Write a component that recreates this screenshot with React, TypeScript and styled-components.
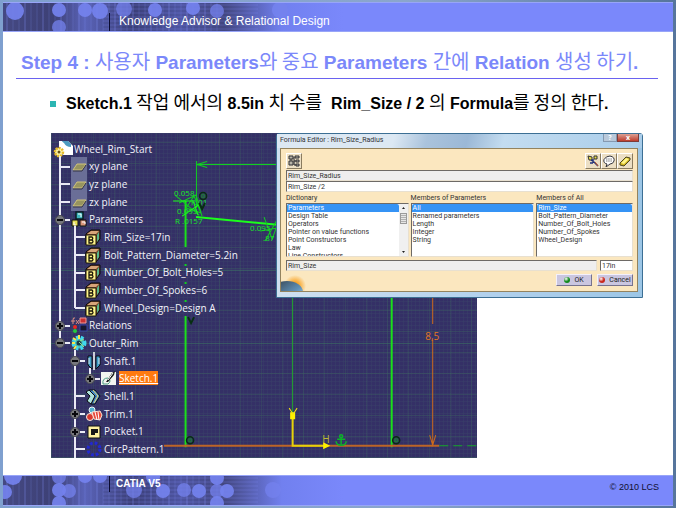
import React from 'react';
import styled, { createGlobalStyle } from 'styled-components';

const GlobalStyle = createGlobalStyle`
  *, *::before, *::after { box-sizing: border-box; }
  body { margin: 0; background: #5f84bd; }
  h1, h2, p, ul { margin: 0; padding: 0; }
`;

const sans = `"Liberation Sans", "Noto Sans CJK KR", sans-serif`;
const ui = `"Open Sans", "Noto Sans", sans-serif`;
const compact = `Roboto, "Open Sans", sans-serif`;

/* ---------- slide frame ---------- */

const Slide = styled.div`
  min-height: 100vh;
  display: flex;
  flex-direction: column;
  padding: 2px 3px;
  background: linear-gradient(90deg, #7fa0cf, #8ba6cc 60%, #56759c);
  font-family: ${sans};
`;

const Band = styled.header<{ $foot?: boolean }>`
  position: relative;
  display: flex;
  align-items: flex-start;
  height: ${p => (p.$foot ? 31 : 30)}px;
  background: #7a88fb;
  border: solid #98a5f8;
  border-width: 1px 0;
  overflow: hidden;
`;

const BandArt = styled.svg`
  position: absolute;
  inset: 0 auto 0 0;
`;

const BandTick = styled.span<{ $foot?: boolean }>`
  position: relative;
  width: 1px;
  height: ${p => (p.$foot ? 16 : 20)}px;
  margin: ${p => (p.$foot ? 0 : 10)}px 0 0 106px;
  background: #0a0a30;
`;

const BandTitle = styled.p`
  position: relative;
  margin: 10px 0 0 9px;
  font-size: 12px;
  line-height: 16px;
  color: #fff;
`;

const Product = styled.p`
  position: relative;
  margin: 2px 0 0 6px;
  font-size: 10px;
  line-height: 12px;
  font-weight: 700;
  color: #fff;
`;

const Copyright = styled.p`
  position: relative;
  margin: 4px 14px 0 auto;
  font-size: 9px;
  line-height: 14px;
  color: #101030;
`;

const Body = styled.main`
  flex: 1;
  background: #fff;
  padding: 17px 15px 16px 13px;
`;

const Title = styled.h1`
  padding: 0 5px 1px;
  border-bottom: 1px solid #6a62f0;
  font-size: 19px;
  line-height: 28px;
  color: #7b88fa;
  white-space: nowrap;
`;

const Ko = styled.span<{ $small?: boolean }>`
  font-family: "Noto Sans CJK KR", sans-serif;
  font-size: ${p => (p.$small ? 18 : 20)}px;
  font-weight: 400;
  line-height: 1;
`;

const Bullet = styled.h2`
  display: flex;
  align-items: center;
  gap: 10px;
  margin: 13px 0 18px 34px;
  font-size: 16px;
  line-height: 22px;
  color: #000;
  white-space: pre;

  &::before {
    content: '';
    width: 6px;
    height: 6px;
    background: #2cb5b2;
  }
`;

/* ---------- figure ---------- */

const Figure = styled.section`
  position: relative;
  margin: 0 15px 0 35px;
`;

const Stage = styled.div`
  position: relative;
  width: 72%;
  height: 325px;
  overflow: hidden;
  background-color: #343066;
  background-image:
    repeating-linear-gradient(0deg, rgba(62, 120, 92, 0.28) 0 1px, transparent 1px 21px),
    repeating-linear-gradient(90deg, rgba(62, 120, 92, 0.22) 0 1px, transparent 1px 21px),
    repeating-linear-gradient(0deg, rgba(70, 100, 110, 0.14) 0 1px, transparent 1px 4px),
    repeating-linear-gradient(90deg, rgba(70, 100, 110, 0.14) 0 1px, transparent 1px 4px);
`;

const Drawing = styled.svg`
  position: absolute;
  inset: 0;
  width: 100%;
  height: 100%;
`;

const Tree = styled.ul`
  position: relative;
  display: grid;
  grid-template-rows: repeat(18, 1fr);
  height: 100%;
  padding: 7px 0 0 2px;
  list-style: none;
  font-family: ${ui};
  font-size: 10px;
  line-height: 14px;
  color: #f2f2fa;
`;

const TreeRow = styled.li`
  display: flex;
  align-items: center;
  min-height: 0;
`;

const Cell = styled.svg`
  flex: none;
  width: 15px;
  height: 18px;
  overflow: visible;
`;

const NodeIcon = styled.svg<{ $root?: boolean }>`
  flex: none;
  width: 16px;
  height: 16px;
  margin: ${p => (p.$root ? '0 3px 0 2px' : '0 2px 0 3px')};
  overflow: visible;
`;

const NodeName = styled.span<{ $active?: boolean }>`
  white-space: nowrap;
  ${p => p.$active && `
    background: #ff7a10;
    color: #fff;
    text-decoration: underline;
  `}
`;

/* ---------- formula editor ---------- */

const Dialog = styled.form`
  position: absolute;
  top: 0;
  right: 0;
  width: 62%;
  padding: 0 4px 5px 3px;
  border: 1px solid #3c6f94;
  border-radius: 3px 3px 0 0;
  background: linear-gradient(90deg, #cfe0f0, #b6d3ee 50%, #9cc6e6);
  font-family: ${compact};
  font-size: 7px;
  line-height: 9px;
  color: #333;
`;

const TitleBar = styled.div`
  display: flex;
  align-items: flex-start;
  justify-content: space-between;
  height: 14px;
  margin: 0 -4px 0 -3px;
  padding: 0 3px;
  background: linear-gradient(105deg, #dce8f3 0 32%, #aac3dc 41%, #9bb8d6 52%, #c3dcf0 62%, #a9cdea);
`;

const Caption = styled.span`
  padding-top: 2px;
`;

const WindowButtons = styled.div`
  display: flex;
`;

const WindowButton = styled.button<{ $close?: boolean }>`
  width: ${p => (p.$close ? 22 : 14)}px;
  height: 8px;
  padding: 0;
  border: 1px solid ${p => (p.$close ? '#7e3b38' : '#8599b0')};
  border-top: 0;
  background: ${p => (p.$close ? 'linear-gradient(#dda093, #bd3c2c)' : '#b9c9da')};
  color: #fff;
  font: 700 7px/7px ${ui};
`;

const Panel = styled.div`
  padding: 4px 4px 3px 5px;
  border: 1px solid #93835f;
  background: #fbe7bf;
`;

const Toolbar = styled.div`
  display: flex;
  margin-bottom: 1px;
`;

const ToolButton = styled.button<{ $push?: boolean }>`
  width: 16px;
  height: 16px;
  padding: 1px;
  margin-left: ${p => (p.$push ? 'auto' : 0)};
  border: 1px solid;
  border-color: #fff #8a7c60 #8a7c60 #fff;
  background: #ecdfc4;

  svg { display: block; width: 12px; height: 12px; }
`;

const Field = styled.input<{ $muted?: boolean }>`
  display: block;
  min-width: 0;
  width: 100%;
  height: 11px;
  padding: 0 1px;
  border: 1px solid;
  border-color: #6e6a66 #e8e0d0 #e8e0d0 #6e6a66;
  border-radius: 0;
  background: ${p => (p.$muted ? '#efeeee' : '#fff')};
  font: 7px/9px ${compact};
  color: #333;
`;

const Columns = styled.div`
  display: grid;
  grid-template-columns: 123fr 124fr 97fr;
  gap: 2px;
  padding-top: 2px;
`;

const Column = styled.div`
  display: flex;
  flex-direction: column;
  min-width: 0;
`;

const ListFrame = styled.div`
  display: flex;
  height: 54px;
  border: 1px solid;
  border-color: #6e6a66 #e8e0d0 #e8e0d0 #6e6a66;
  background: #fff;
  overflow: hidden;
`;

const List = styled.select`
  flex: 1;
  min-width: 0;
  height: 62px;
  padding: 0;
  border: 0;
  outline: 0;
  background: #fff;
  overflow: hidden;
  font: 7px/8px ${compact};
  color: #333;

  option {
    min-height: 0;
    height: 8px;
    padding: 0 1px;
    line-height: 8px;
    font-size: 7px;
  }
  option:checked {
    background: linear-gradient(#3593f5, #3593f5);
    color: #fff;
  }
`;

const ScrollRail = styled.div`
  display: flex;
  flex-direction: column;
  justify-content: space-between;
  width: 9px;
  background: #f0f0f0;
`;

const ScrollKey = styled.svg`
  width: 9px;
  height: 8px;
`;

const ScrollThumb = styled.span`
  height: 11px;
  margin: 0 1px 24px;
  border: 1px solid #9a9a9a;
  background: repeating-linear-gradient(#e6e6e6 0 1px, #b0b0b0 1px 2px);
`;

const ValueRow = styled.div`
  display: grid;
  grid-template-columns: 1fr 33px;
  gap: 3px;
  padding-top: 3px;
`;

const Actions = styled.div`
  display: flex;
  align-items: flex-end;
  gap: 5px;
  margin-top: 2px;
`;

const Emblem = styled.svg`
  width: 28px;
  height: 18px;
  margin: 0 auto -3px -5px;
`;

const ActionButton = styled.button`
  display: flex;
  align-items: center;
  justify-content: center;
  gap: 4px;
  width: 36px;
  height: 12px;
  padding: 0;
  margin-bottom: 2px;
  border: 1px solid;
  border-color: #f3f0fb #77738e #77738e #f3f0fb;
  background: #cac6e0;
  font: 7px/9px ${compact};
  color: #222;
`;

const Lamp = styled.span<{ $tone: string }>`
  width: 6px;
  height: 6px;
  border-radius: 50%;
  background: radial-gradient(circle at 35% 30%, #fff, ${p => p.$tone} 50%);
`;

/* ---------- drawings ---------- */

function BandPattern({ id, foot }: { id: string; foot?: boolean }) {
  const top = [[12, 8, 9], [56, 7, 7], [56, 24, 7], [82, 7, 7], [97, 8, 8], [121, 6, 8], [152, 7, 7], [190, 5, 7], [214, 8, 7], [277, 7, 8]];
  const low = [[10, 0, 9], [2, 16, 7], [56, 1, 7], [56, 14, 7], [56, 27, 7], [66, 15, 7], [82, 0, 7], [97, 0, 7], [131, 14, 8], [150, 1, 7], [160, 15, 7], [181, 14, 7], [196, 15, 7], [214, 2, 7], [214, 15, 7], [214, 27, 7], [224, 15, 7], [270, 14, 8]];
  return (
    <BandArt width="340" height="31" viewBox="0 0 340 31" aria-hidden="true">
      <defs>
        <linearGradient id={id}>
          <stop offset="0" stopColor="#454983" />
          <stop offset=".15" stopColor="#3d4075" />
          <stop offset=".24" stopColor="#5a63b8" />
          <stop offset=".38" stopColor="#3b3f78" />
          <stop offset=".52" stopColor="#4d54a0" />
          <stop offset=".65" stopColor="#42467f" />
          <stop offset=".82" stopColor="#7180ef" />
          <stop offset="1" stopColor="#7a88fb" />
        </linearGradient>
      </defs>
      <rect width="340" height="31" fill={`url(#${id})`} />
      {Array.from({ length: 36 }, (_, i) => (
        <path key={i} d={`M${i * 6 + 4} 0v31`} stroke="#8795ff" strokeOpacity={i % 3 ? 0.2 : 0.4} />
      ))}
      {Array.from({ length: 8 }, (_, i) => (
        <path key={i} d={`M100 ${i * 4 + 2}H255`} stroke="#8795ff" strokeOpacity=".25" />
      ))}
      {(foot ? low : top).map(([x, y, r], i) => (
        <circle key={i} cx={x} cy={y} r={r} fill="#7482ee" fillOpacity={i % 3 === 2 ? 0.75 : 0.92} />
      ))}
    </BandArt>
  );
}

function Sketch() {
  return (
    <Drawing viewBox="0 0 426 325" preserveAspectRatio="xMinYMin slice" aria-hidden="true">
      <path d="M0 210.500H426M0 137.500H226" stroke="#3c7a62" strokeOpacity=".5" />
      <g stroke="#10d020" fill="none">
        <path d="M145.500 28V75M146 31.500H240M146 31.500l10-3M146 31.500l10 3" />
        <path d="M134.500 68V114M134.500 183V314M340.500 160V314" stroke="#1be01b" strokeWidth="2" />
        <path d="M134.500 131v50" strokeWidth="2" strokeDasharray="2 16" />
        <path d="M241.500 160V280" stroke="#22a82c" />
        <path d="M145 84l84 8" stroke="#1bff1b" strokeWidth="2" />
        <path d="M124 62l24 20M128 70l17-8 5 18-15-5 8-12 8 20M213 84l8 22 8-22M214 108l14-25M209 98l17-3" />
        <path d="M122 68h20l5 14M131 83l18-12" stroke="#1bff1b" />
      </g>
      <g fontFamily="Open Sans, sans-serif" fontSize="8" fill="#18e828">
        <text x="123" y="63">0.058</text>
        <text x="140" y="72">R.01</text>
        <text x="126" y="81">0.095</text>
        <text x="124" y="91">R .0157</text>
        <text x="199" y="98">0.095</text>
        <text x="212" y="108">.87</text>
      </g>
      <path d="M113 312.500H388" stroke="#bd6527" strokeWidth="2" />
      <path d="M388 312.500H426" stroke="#16a52a" strokeDasharray="9 5" />
      <path d="M381.500 160V191M381.500 207V312M378.500 302l3 10 3-10" stroke="#ce6a1c" fill="none" />
      <text x="374" y="207" fontFamily="Open Sans, sans-serif" fontSize="10" fill="#e57622">8,5</text>
      <path d="M241.500 280V312.500H276" stroke="#e6d20a" strokeWidth="2" fill="none" />
      <path d="M239 279h5v7h-5zM272 309l7 3.500-7 3.500z" fill="#fff000" />
      <path d="M238 275l4 6 4-6" stroke="#f2e311" fill="none" />
      <text x="271" y="310" fontFamily="Open Sans, sans-serif" fontSize="10" fill="#bdb832">H</text>
      <g stroke="#072f12" fill="none">
        {[[139, 307], [345, 307], [152, 63]].map(([x, y]) => (
          <g key={`${x}-${y}`}>
            <circle cx={x} cy={y} r="3.500" strokeWidth="1.500" />
            <circle cx={x} cy={y} r="1.500" stroke="#18892a" />
          </g>
        ))}
        <path d="M137 184l3 6 3-6M148 70l3 6 3-6" strokeWidth="2" />
      </g>
      <g stroke="#0cb32a" fill="none" strokeWidth="1.500">
        <circle cx="290" cy="303" r="1.500" />
        <path d="M290 304v7M286 306h8M285 308q0 4 5 4t5-4" />
      </g>
    </Drawing>
  );
}

type Guide = 'none' | 'line' | 'tee' | 'end' | 'plus' | 'minus' | 'plusEnd' | 'minusEnd';

function GuideCell({ kind }: { kind: Guide }) {
  const toggle = kind.startsWith('plus') || kind.startsWith('minus');
  const last = kind === 'end' || kind.endsWith('End');
  return (
    <Cell viewBox="0 0 15 18" aria-hidden="true">
      {kind !== 'none' && <path d={`M7 -2V${last ? 9 : 20}`} stroke="#e9e9f4" strokeWidth="2" />}
      {kind !== 'none' && kind !== 'line' && <path d="M7 9H17" stroke="#e9e9f4" strokeWidth="2" />}
      {toggle && (
        <>
          <circle cx="7" cy="9" r="4.500" fill="#77787d" stroke="#4c4d52" />
          <path d={kind.startsWith('plus') ? 'M4 9h6M7 6v6' : 'M4 9h6'} stroke="#08080c" strokeWidth="2" />
        </>
      )}
    </Cell>
  );
}

type IconName = 'root' | 'plane' | 'params' | 'param' | 'relations' | 'body' | 'shaft' | 'sketch' | 'shell' | 'trim' | 'pocket' | 'circ';

const icons: Record<IconName, React.ReactNode> = {
  root: (
    <>
      <path d="M4 0h9l5 5v9H8z" fill="#fff" />
      <path d="M6 0h7l3 3v3q-5 0-7-4z" fill="#4d9bc0" />
      <path d="M4 0h3q2 7 9 8v6H8L4 6z" fill="#fff" />
      <circle cx="4" cy="11" r="4" fill="#fff7ac" stroke="#e5b928" strokeWidth="2.500" strokeDasharray="2 1" />
      <circle cx="4" cy="11" r="1.500" fill="#6a5418" />
    </>
  ),
  plane: (
    <>
      <path d="M0 -1h16v18H0z" fill="#6a6e97" />
      <path d="M2 12l4-6h9l-4 6z" fill="#97945f" stroke="#d0c37c" />
      <path d="M2 13h9l4-6" stroke="#343447" fill="none" />
    </>
  ),
  params: (
    <>
      <path d="M5 1h7v7H5z" fill="#3fb6bd" stroke="#0a1c22" strokeWidth="1.500" />
      <path d="M1 9h6v6H1z" fill="#e4de57" stroke="#0c0c0c" />
      <path d="M9 9h6v6H9z" fill="#d8977b" stroke="#0c0c0c" />
      <path d="M7 3h3v3M3 11v3h2M11 11h3v2" stroke="#fff" fill="none" />
    </>
  ),
  param: (
    <>
      <path d="M0 5l5-4h9v9l-4 5H0z" fill="#74452a" stroke="#090909" />
      <path d="M1 5l4-3h8l-3 3z" fill="#d7a579" />
      <path d="M11 6l2-3v7l-2 3z" fill="#57b98c" />
      <path d="M0 6h10v10H0z" fill="#fff38a" stroke="#1a160a" />
      <path d="M3 8v6h3q2-1.500 0-3 1.500-2 0-3zM3 11h3" stroke="#1a160a" strokeWidth="1.300" fill="none" />
    </>
  ),
  relations: (
    <>
      <path d="M4 1q-2-1-2 2v4M0 4h4M5 3l3 4M8 3l-3 4" stroke="#d98c84" fill="none" />
      <path d="M9 1h6v5H9z" fill="#c93131" stroke="#f09797" />
      <path d="M9 8h7v6H9z" fill="#17172c" stroke="#3940a4" />
      <circle cx="4" cy="10" r="2" fill="#e92a22" />
      <circle cx="4" cy="14" r="2" fill="#24cb3e" />
    </>
  ),
  body: (
    <>
      <circle cx="8" cy="8" r="5.500" fill="#4ab9ad" stroke="#41d8ee" strokeWidth="4" strokeDasharray="2.500 2" />
      <path d="M2 3l3 2M1 8h3M3 14l2-3M8 0v4" stroke="#f7e64c" strokeWidth="2" />
      <circle cx="8" cy="8" r="2.500" fill="#183b49" />
      <path d="M8 7l5 5M9 6l4-2" stroke="#8ee58b" />
    </>
  ),
  shaft: (
    <>
      <path d="M2 3h4v13l-4-4zM14 3h-4v13l4-4z" fill="#3e9bc6" stroke="#0a0a12" />
      <path d="M8 -1V17" stroke="#fff" strokeWidth="1.500" />
      <path d="M3 5v6M13 5v6" stroke="#d5edf6" />
    </>
  ),
  sketch: (
    <>
      <path d="M0 2h15v13H0z" fill="#f2f5f0" />
      <path d="M2 14q-1-6 5-6 4 3 0 6z" fill="none" stroke="#4a9a82" />
      <path d="M5 12l6-9 3-2-1 4-6 7z" fill="#161616" />
      <path d="M7 10l5-7" stroke="#fff" />
    </>
  ),
  shell: (
    <>
      <path d="M3 2h6l5 6-5 8H5l4-8z" fill="#4088c4" stroke="#0b0b12" />
      <path d="M0 4l3-2 6 6-4 8-4-3 3-5z" fill="#aee2da" stroke="#0b0b12" />
      <path d="M7 2l5 6-4 7" stroke="#f0d870" fill="none" />
    </>
  ),
  trim: (
    <>
      <circle cx="4" cy="11" r="3.500" fill="#d73a2e" stroke="#f6ece5" />
      <circle cx="6" cy="4" r="3" fill="#54b4d0" stroke="#eef6f5" />
      <path d="M6 6l8-1 2 4-2 5-6-1z" fill="#e8493a" stroke="#fbe6d9" />
      <path d="M9 6l2 8M12 6l1 8" stroke="#fff" />
    </>
  ),
  pocket: (
    <>
      <path d="M2 3h12v12H2z" fill="#fff1a0" stroke="#0c0c10" />
      <path d="M5 6h7v4H9v2H5z" fill="#17171a" />
    </>
  ),
  circ: (
    <circle cx="8" cy="8" r="6" fill="none" stroke="#2229d2" strokeWidth="3" strokeDasharray="2.700 2" />
  ),
};

interface TreeNode { label: string; icon: IconName; guides: Guide[]; active?: boolean }

const nodes: TreeNode[] = [
  { label: 'Wheel_Rim_Start', icon: 'root', guides: [] },
  { label: 'xy plane', icon: 'plane', guides: ['tee'] },
  { label: 'yz plane', icon: 'plane', guides: ['tee'] },
  { label: 'zx plane', icon: 'plane', guides: ['tee'] },
  { label: 'Parameters', icon: 'params', guides: ['minus'] },
  { label: 'Rim_Size=17in', icon: 'param', guides: ['line', 'tee'] },
  { label: 'Bolt_Pattern_Diameter=5.2in', icon: 'param', guides: ['line', 'tee'] },
  { label: 'Number_Of_Bolt_Holes=5', icon: 'param', guides: ['line', 'tee'] },
  { label: 'Number_Of_Spokes=6', icon: 'param', guides: ['line', 'tee'] },
  { label: 'Wheel_Design=Design A', icon: 'param', guides: ['line', 'end'] },
  { label: 'Relations', icon: 'relations', guides: ['plus'] },
  { label: 'Outer_Rim', icon: 'body', guides: ['minusEnd'] },
  { label: 'Shaft.1', icon: 'shaft', guides: ['none', 'minus'] },
  { label: 'Sketch.1', icon: 'sketch', guides: ['none', 'line', 'plusEnd'], active: true },
  { label: 'Shell.1', icon: 'shell', guides: ['none', 'tee'] },
  { label: 'Trim.1', icon: 'trim', guides: ['none', 'plus'] },
  { label: 'Pocket.1', icon: 'pocket', guides: ['none', 'plus'] },
  { label: 'CircPattern.1', icon: 'circ', guides: ['none', 'tee'] },
];

function MemberList({ id, label, items, scroll }: { id: string; label: string; items: string[]; scroll?: boolean }) {
  return (
    <Column>
      <label htmlFor={id}>{label}</label>
      <ListFrame>
        <List id={id} size={7} defaultValue={items[0]}>
          {items.map(item => <option key={item}>{item}</option>)}
        </List>
        {scroll && (
          <ScrollRail aria-hidden="true">
            <ScrollKey viewBox="0 0 9 8"><path d="M3 5l1.500-2L6 5z" fill="#222" /></ScrollKey>
            <ScrollThumb />
            <ScrollKey viewBox="0 0 9 8"><path d="M3 3l1.500 2L6 3z" fill="#222" /></ScrollKey>
          </ScrollRail>
        )}
      </ListFrame>
    </Column>
  );
}

function FormulaEditor() {
  return (
    <Dialog onSubmit={e => e.preventDefault()} aria-label="Formula Editor">
      <TitleBar>
        <Caption>Formula Editor : Rim_Size_Radius</Caption>
        <WindowButtons>
          <WindowButton type="button" aria-label="Help">?</WindowButton>
          <WindowButton type="button" $close aria-label="Close">x</WindowButton>
        </WindowButtons>
      </TitleBar>
      <Panel>
        <Toolbar>
          <ToolButton type="button" aria-label="Incremental">
            <svg viewBox="0 0 12 12">
              <path d="M1 1h4v3H1zM1 6h4v4H1zM7 1h4v2H7zM8 5h3v2H8zM8 9h3v2H8zM3 4v2M6 2v8h2M6 6h2" fill="#b8b4a8" stroke="#2e2e33" />
            </svg>
          </ToolButton>
          <ToolButton type="button" $push aria-label="Language browser">
            <svg viewBox="0 0 12 12">
              <path d="M1 1l4 1v3H2zM7 1h3v3H7z" fill="#eadc49" stroke="#333" />
              <path d="M4 5l3 2 4 4M3 8h3M6 4v4" stroke="#22337c" strokeWidth="1.500" fill="none" />
              <path d="M8 7l3 4" stroke="#c95b26" />
            </svg>
          </ToolButton>
          <ToolButton type="button" aria-label="Comment">
            <svg viewBox="0 0 12 12">
              <path d="M4 9Q0 8 1 4.500 3 1 7 1q5 1 4 5-1 3-4 3l-4 3z" fill="#fff" stroke="#33333b" />
              <path d="M3 4h6M3 6h6" stroke="#777" strokeDasharray="1.500 .7" />
            </svg>
          </ToolButton>
          <ToolButton type="button" aria-label="Erase">
            <svg viewBox="0 0 12 12">
              <path d="M1 8l6-6 4 1v2l-6 6-4-1z" fill="#d1b51f" stroke="#4a4420" />
              <path d="M2 8l5-5 3 1-5 5z" fill="#fff58a" />
            </svg>
          </ToolButton>
        </Toolbar>
        <Field $muted readOnly aria-label="Parameter" value="Rim_Size_Radius" />
        <Field aria-label="Formula" defaultValue="Rim_Size /2" />
        <Columns>
          <MemberList
            id="dictionary"
            label="Dictionary"
            scroll
            items={['Parameters', 'Design Table', 'Operators', 'Pointer on value functions', 'Point Constructors', 'Law', 'Line Constructors']}
          />
          <MemberList
            id="members-parameters"
            label="Members of Parameters"
            items={['All', 'Renamed parameters', 'Length', 'Integer', 'String']}
          />
          <MemberList
            id="members-all"
            label="Members of All"
            items={['Rim_Size', 'Bolt_Pattern_Diameter', 'Number_Of_Bolt_Holes', 'Number_Of_Spokes', 'Wheel_Design']}
          />
        </Columns>
        <ValueRow>
          <Field $muted readOnly aria-label="Selected member" value="Rim_Size" />
          <Field aria-label="Value" defaultValue="17in" />
        </ValueRow>
        <Actions>
          <Emblem viewBox="0 0 28 18" aria-hidden="true">
            <defs>
              <radialGradient id="glow"><stop offset=".3" stopColor="#f9a01c" /><stop offset="1" stopColor="#fbe7bf" /></radialGradient>
              <linearGradient id="globe" x2="1" y2="1"><stop stopColor="#333c46" /><stop offset=".6" stopColor="#5e91b8" /><stop offset="1" stopColor="#c4e0ee" /></linearGradient>
            </defs>
            <circle cx="14" cy="13" r="11" fill="url(#glow)" />
            <ellipse cx="6" cy="19" rx="16" ry="11" fill="url(#globe)" />
          </Emblem>
          <ActionButton type="submit"><Lamp $tone="#128a1d" />OK</ActionButton>
          <ActionButton type="button"><Lamp $tone="#c9271c" />Cancel</ActionButton>
        </Actions>
      </Panel>
    </Dialog>
  );
}

export default function App() {
  return (
    <>
      <GlobalStyle />
      <Slide>
        <Band>
          <BandPattern id="band-top" />
          <BandTick />
          <BandTitle>Knowledge Advisor &amp; Relational Design</BandTitle>
        </Band>
        <Body>
          <Title>
            Step 4 : <Ko>사용자</Ko> Parameters<Ko>와 중요</Ko> Parameters <Ko>간에</Ko> Relation <Ko>생성 하기</Ko>.
          </Title>
          <Bullet>
            <span>Sketch.1 <Ko $small>작업 에서의</Ko> 8.5in <Ko $small>치 수를</Ko>  Rim_Size / 2 <Ko $small>의</Ko> Formula<Ko $small>를 정의 한다</Ko>.</span>
          </Bullet>
          <Figure>
            <Stage>
              <Sketch />
              <Tree>
                {nodes.map(node => (
                  <TreeRow key={node.label}>
                    {node.guides.map((kind, i) => <GuideCell key={i} kind={kind} />)}
                    <NodeIcon viewBox="0 0 16 16" $root={node.icon === 'root'} aria-hidden="true">{icons[node.icon]}</NodeIcon>
                    <NodeName $active={node.active}>{node.label}</NodeName>
                  </TreeRow>
                ))}
              </Tree>
            </Stage>
            <FormulaEditor />
          </Figure>
        </Body>
        <Band as="footer" $foot>
          <BandPattern id="band-bottom" foot />
          <BandTick $foot />
          <Product>CATIA V5</Product>
          <Copyright>© 2010 LCS</Copyright>
        </Band>
      </Slide>
    </>
  );
}
